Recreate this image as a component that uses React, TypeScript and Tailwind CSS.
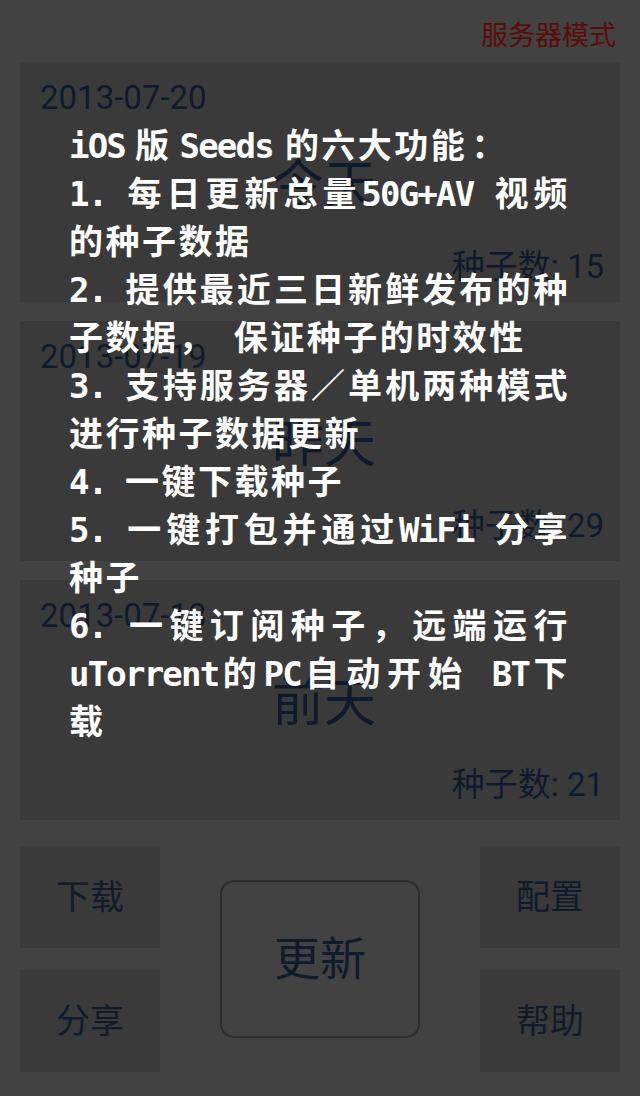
import React from "react";

const CJK = '"Noto Sans CJK SC", sans-serif';
const BASE = 'Roboto, "Noto Sans CJK SC", sans-serif';
const MONO = '"DejaVu Sans Mono", "Noto Sans CJK SC", monospace';

type Card = { date: string; title: string; count: string };

const cards: Card[] = [
  { date: "2013-07-20", title: "今天", count: "15" },
  { date: "2013-07-19", title: "昨天", count: "29" },
  { date: "2013-07-18", title: "前天", count: "21" },
];

const lines: { t: string; full?: boolean }[] = [
  { t: "1. 每日更新总量50G+AV 视频", full: true },
  { t: "的种子数据" },
  { t: "2. 提供最近三日新鲜发布的种", full: true },
  { t: "子数据， 保证种子的时效性" },
  { t: "3. 支持服务器／单机两种模式", full: true },
  { t: "进行种子数据更新" },
  { t: "4. 一键下载种子" },
  { t: "5. 一键打包并通过WiFi 分享", full: true },
  { t: "种子" },
  { t: "6. 一键订阅种子，远端运行", full: true },
  { t: "uTorrent的PC自动开始 BT下", full: true },
  { t: "载" },
];

function Mono({ children, className = "" }: { children: React.ReactNode; className?: string }) {
  return (
    <span
      className={"leading-none tracking-[-1.8px] " + className}
      style={{ fontFamily: MONO }}
    >
      {children}
    </span>
  );
}

function Runs({ text }: { text: string }) {
  const parts = text.split(/([\x20-\x7E]+)/).filter((p) => p.length > 0);
  return (
    <>
      {parts.map((p, i) =>
        /^[\x20-\x7E]+$/.test(p) ? (
          <Mono key={i}>{p}</Mono>
        ) : (
          <span key={i}>{p}</span>
        )
      )}
    </>
  );
}

function SmallButton({ label }: { label: string }) {
  return (
    <div className="flex h-[102px] w-[140px] items-center justify-center bg-[#3a3a3a] text-[34px] leading-none text-[#101b2c]">
      {label}
    </div>
  );
}

export default function App() {
  return (
    <div
      className="relative flex h-[1096px] w-[640px] flex-col overflow-hidden bg-[#424242] px-[20px]"
      style={{ fontFamily: BASE }}
    >
      <div
        className="flex h-[62px] justify-end pr-[4px] pt-[20px] text-[27px] leading-[27px] text-[#5c0b0b]"
        style={{ fontFamily: CJK }}
      >
        服务器模式
      </div>

      <div className="flex flex-col gap-[19px]">
        {cards.map((c) => (
          <div
            key={c.date}
            className="flex h-[240px] flex-col bg-[#3a3a3a] pb-[19px] pl-[20px] pr-[16px] pt-[20px] text-[#0f1a2c]"
          >
            <div className="text-[33px] leading-[32px]">{c.date}</div>
            <div
              className="-mr-[4px] flex flex-1 items-center justify-center text-[52px] leading-none"
              style={{ fontFamily: CJK }}
            >
              {c.title}
            </div>
            <div className="self-end text-[33px] leading-[32px]">
              <span style={{ fontFamily: CJK }}>种子数</span>: {c.count}
            </div>
          </div>
        ))}
      </div>

      <div className="mt-[26px] flex items-center justify-between">
        <div className="flex flex-col gap-[22px]">
          <SmallButton label="下载" />
          <SmallButton label="分享" />
        </div>
        <div className="flex h-[158px] w-[200px] items-center justify-center rounded-[14px] border-2 border-[#2e2e2e] bg-[#424242] text-[46px] leading-none text-[#101b2c]">
          更新
        </div>
        <div className="flex flex-col gap-[22px]">
          <SmallButton label="配置" />
          <SmallButton label="帮助" />
        </div>
      </div>

      <div
        className="absolute left-[69px] top-[120px] w-[501px] text-[34px] font-bold leading-[48px] tracking-[2.5px] text-white"
        style={{ fontFamily: CJK }}
      >
        <div className="h-[48px] whitespace-nowrap">
          <Mono>iOS</Mono>
          <span className="ml-[10px]">版</span>
          <Mono className="ml-[8px]">Seeds</Mono>
          <span className="ml-[12px]">的六大功能</span>
          <span className="ml-[4px]">：</span>
        </div>
        {lines.map((l, i) => (
          <div
            key={i}
            className={
              l.full
                ? "h-[48px] whitespace-nowrap text-justify [text-align-last:justify]"
                : "h-[48px] whitespace-pre"
            }
          >
            <Runs text={l.t} />
          </div>
        ))}
      </div>
    </div>
  );
}
